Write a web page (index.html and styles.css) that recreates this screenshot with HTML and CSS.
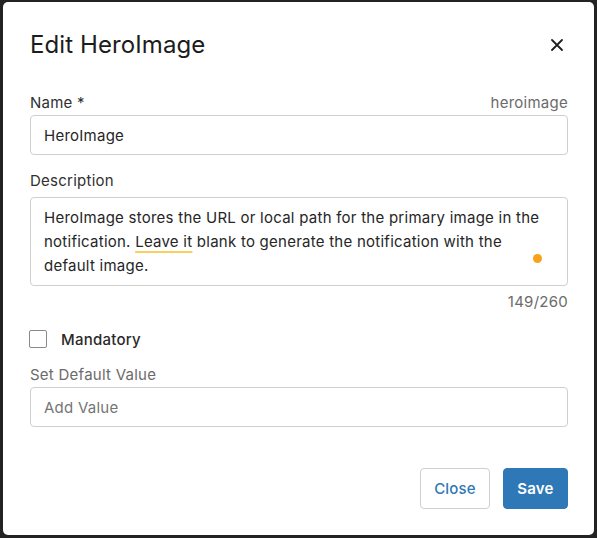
FILE: index.html
```html
<!DOCTYPE html>
<html lang="en">
<head>
<meta charset="utf-8">
<title>Edit HeroImage</title>
<link rel="stylesheet" href="styles.css">
</head>
<body>
<div class="dialog">
  <div class="header">
    <h1 class="title">Edit HeroImage</h1>
    <button class="close-x" aria-label="Close">
      <svg width="12" height="12" viewBox="0 0 12 12"><path d="M1 1L11 11M11 1L1 11" stroke="#1f1f1f" stroke-width="1.8" stroke-linecap="round"/></svg>
    </button>
  </div>

  <div class="label-row name-row">
    <span class="label dark">Name *</span>
    <span class="hint">heroimage</span>
  </div>
  <div class="input">HeroImage</div>

  <div class="label-row desc-row">
    <span class="label dark">Description</span>
  </div>
  <div class="textarea">
    HeroImage stores the URL or local path for the primary image in the notification. <span class="flag">Leave it</span> blank to generate the notification with the default image.
    <span class="dot"></span>
  </div>
  <div class="counter">149/260</div>

  <label class="check-row">
    <span class="checkbox"></span>
    <span class="check-label">Mandatory</span>
  </label>

  <div class="label-row default-row">
    <span class="label muted">Set Default Value</span>
  </div>
  <div class="input placeholder">Add Value</div>

  <div class="footer">
    <button class="btn btn-outline">Close</button>
    <button class="btn btn-primary">Save</button>
  </div>
</div>
</body>
</html>
```

FILE: styles.css
```css
html, body {
  margin: 0;
  padding: 0;
  background: #232323;
  width: 597px;
  height: 538px;
  overflow: hidden;
}

body {
  font-family: Inter, "Noto Sans", sans-serif;
  color: #1f1f1f;
  letter-spacing: 0.25px;
}

.dialog {
  box-sizing: border-box;
  margin: 2px 3px 0 3px;
  width: 591px;
  height: 533px;
  background: #ffffff;
  border-radius: 5px;
  padding: 29px 26px 0 27px;
}

.header {
  display: flex;
  align-items: center;
  justify-content: space-between;
  height: 28px;
}

.title {
  margin: 0;
  font-size: 24px;
  font-weight: 400;
  line-height: 28px;
  color: #1c1c1c;
  letter-spacing: 0.1px;
}

.close-x {
  border: 0;
  background: none;
  padding: 0;
  width: 12px;
  height: 12px;
  margin-right: 5px;
  display: flex;
  align-items: center;
  justify-content: center;
}

.label-row {
  display: flex;
  justify-content: space-between;
  align-items: center;
  height: 20px;
  font-size: 15px;
  line-height: 20px;
}

.name-row { margin-top: 34px; margin-bottom: 2px; }
.desc-row { margin-top: 16px; margin-bottom: 6px; }
.default-row { margin-top: 17px; margin-bottom: 2px; }

.label.dark { color: #303030; }
.label.muted { color: #6b6b6b; }
.hint { color: #6b6b6b; }

.input {
  box-sizing: border-box;
  height: 40px;
  border: 1px solid #cfcfcf;
  border-radius: 4px;
  padding: 0 13px;
  display: flex;
  align-items: center;
  font-size: 15px;
  color: #262626;
}

.input.placeholder { color: #757575; }

.textarea {
  position: relative;
  box-sizing: border-box;
  height: 89px;
  border: 1px solid #cfcfcf;
  border-radius: 4px;
  padding: 8px 24px 8px 13px;
  font-size: 15px;
  line-height: 24px;
  color: #262626;
}

.flag {
  text-decoration: underline;
  text-decoration-color: #f8cf5c;
  text-decoration-thickness: 2px;
  text-underline-offset: 4px;
}

.dot {
  position: absolute;
  right: 25px;
  top: 56px;
  width: 9px;
  height: 9px;
  border-radius: 50%;
  background: #f9a11b;
}

.counter {
  text-align: right;
  font-size: 15px;
  line-height: 20px;
  margin-top: 6px;
  color: #6b6b6b;
}

.check-row {
  display: flex;
  align-items: center;
  margin-top: 18px;
  height: 18px;
}

.checkbox {
  box-sizing: border-box;
  width: 18px;
  height: 18px;
  border: 1.5px solid #8a8a8a;
  border-radius: 2px;
  margin-left: -1px;
}

.check-label {
  margin-left: 14px;
  font-size: 15px;
  font-weight: 500;
  color: #2a2a2a;
}

.footer {
  display: flex;
  justify-content: flex-end;
  gap: 13px;
  margin-top: 41px;
}

.btn {
  box-sizing: border-box;
  height: 41px;
  border-radius: 4px;
  font-family: Inter, "Noto Sans", sans-serif;
  font-size: 15px;
  letter-spacing: 0.2px;
  padding: 0 10px;
  cursor: pointer;
}

.btn-outline {
  width: 70px;
  background: #fff;
  border: 1px solid #cfcfcf;
  color: #2f77b5;
  font-weight: 500;
}

.btn-primary {
  width: 65px;
  background: #2f78b7;
  border: 1px solid #2f78b7;
  color: #fff;
  font-weight: 600;
}
```
